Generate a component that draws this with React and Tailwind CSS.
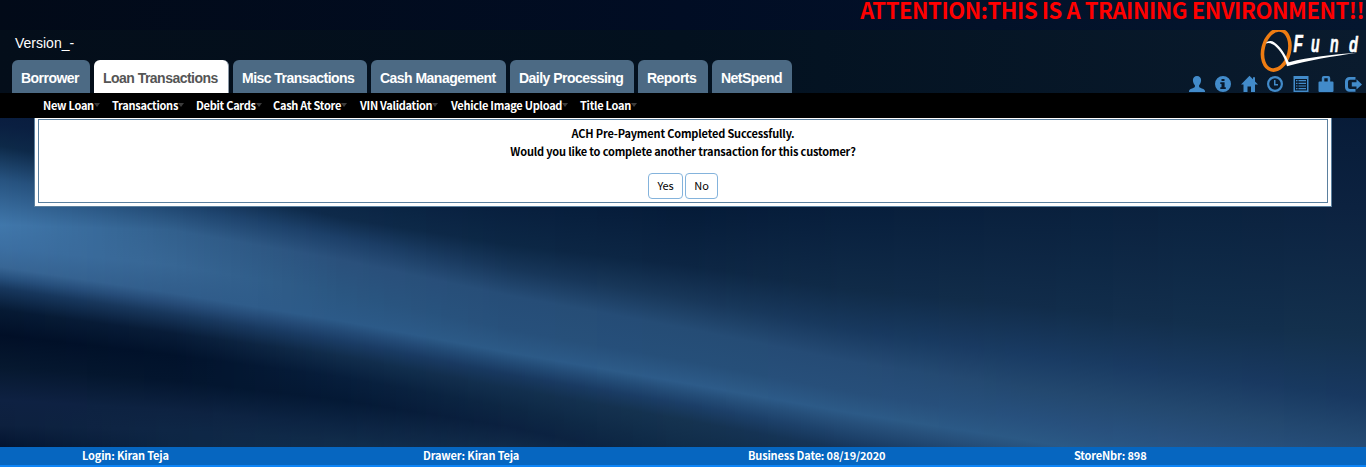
import React from "react";

// Each key column lists [y, colour] stops from the top of the backdrop down;
// stops with the same index follow one fold of the fabric across the page.
const COLUMNS = [
  { x: 0, s: [[93, "#08193a"], [125, "#0a1f41"], [146, "#0d2948"], [180, "#275380"], [225, "#4077ab"], [248, "#3c6fa2"], [267, "#386695"], [278, "#264f7c"], [288, "#17375d"], [310, "#061a34"], [335, "#010f27"], [367, "#06182f"], [400, "#0e2142"], [425, "#0d203e"], [447, "#031430"]] },
  { x: 170, s: [[93, "#071a38"], [145, "#08203f"], [180, "#0f2c4e"], [205, "#1f4670"], [230, "#32608d"], [265, "#376694"], [293, "#315d8b"], [303, "#264b77"], [314, "#18375c"], [333, "#081c38"], [355, "#01122b"], [380, "#03152e"], [410, "#0d2241"], [430, "#0e2645"], [447, "#0d2644"]] },
  { x: 340, s: [[93, "#061b3a"], [175, "#061f3f"], [218, "#0e2a4a"], [238, "#1c3f68"], [260, "#2a507b"], [293, "#2a5681"], [321, "#2c5a88"], [331, "#234a76"], [341, "#1a3c65"], [356, "#112d4c"], [377, "#071e3c"], [400, "#041935"], [425, "#0c2443"], [440, "#102b49"], [470, "#12304f"]] },
  { x: 510, s: [[93, "#051a38"], [200, "#071e3d"], [245, "#0c2745"], [269, "#173659"], [296, "#264d77"], [330, "#27507b"], [353, "#2c5a87"], [363, "#224a75"], [375, "#18385f"], [389, "#122f4e"], [408, "#0d2744"], [427, "#0b2140"], [447, "#102a48"], [470, "#12304f"], [500, "#12304f"]] },
  { x: 683, s: [[93, "#041834"], [207, "#051b38"], [265, "#0c2543"], [298, "#183759"], [328, "#254c75"], [360, "#264f79"], [383, "#2d5b89"], [393, "#244d78"], [404, "#1b3e67"], [420, "#153350"], [447, "#102c49"], [465, "#0d2744"], [480, "#102a48"], [500, "#12304f"], [520, "#12304f"]] },
  { x: 850, s: [[93, "#051935"], [207, "#071e3c"], [290, "#102b48"], [330, "#18395f"], [362, "#254b75"], [392, "#274f7a"], [413, "#2c5a87"], [423, "#264f7a"], [435, "#1e436c"], [450, "#15345a"], [475, "#102c49"], [490, "#0d2744"], [510, "#102a48"], [520, "#12304f"], [540, "#12304f"]] },
  { x: 1025, s: [[93, "#051a36"], [207, "#09203d"], [305, "#112c4a"], [355, "#193b63"], [388, "#23486f"], [418, "#27507d"], [440, "#2b5985"], [452, "#264f7a"], [465, "#1e436c"], [480, "#15345a"], [505, "#102c49"], [520, "#0d2744"], [530, "#102a48"], [540, "#12304f"], [560, "#12304f"]] },
  { x: 1200, s: [[93, "#061a36"], [207, "#0a223f"], [325, "#122f4d"], [375, "#193a61"], [412, "#23486f"], [445, "#29517e"], [470, "#2b5985"], [482, "#264f7a"], [495, "#1e436c"], [510, "#15345a"], [530, "#102c49"], [540, "#0d2744"], [550, "#102a48"], [560, "#12304f"], [570, "#12304f"]] },
  { x: 1366, s: [[93, "#061a36"], [207, "#0c2240"], [335, "#13304d"], [398, "#183860"], [435, "#22476f"], [470, "#29517e"], [497, "#2b5985"], [510, "#264f7a"], [522, "#1e436c"], [535, "#15345a"], [550, "#102c49"], [560, "#0d2744"], [570, "#102a48"], [580, "#12304f"], [590, "#12304f"]] },
];

const mix = (a, b, t) => a + (b - a) * t;
const rgb = (h) => [1, 3, 5].map((i) => parseInt(h.slice(i, i + 2), 16));
const STEP = 3;

function Backdrop() {
  const strips = [];
  for (let x = 0; x < 1366; x += STEP) {
    let i = 0;
    while (i < COLUMNS.length - 2 && COLUMNS[i + 1].x <= x) i++;
    const a = COLUMNS[i];
    const b = COLUMNS[i + 1];
    const t = (x - a.x) / (b.x - a.x);
    strips.push({
      x,
      stops: a.s.map(([y, c], k) => {
        const ca = rgb(c);
        const cb = rgb(b.s[k][1]);
        return {
          y: mix(y, b.s[k][0], t) / 600,
          c: `rgb(${ca.map((v, j) => Math.round(mix(v, cb[j], t))).join(",")})`,
        };
      }),
    });
  }
  return (
    <svg className="absolute inset-0 h-[467px] w-full" viewBox="0 0 1366 467" preserveAspectRatio="none" shapeRendering="crispEdges" aria-hidden="true">
      <defs>
        {strips.map((s) => (
          <linearGradient key={s.x} id={`fold${s.x}`} gradientUnits="userSpaceOnUse" x1="0" y1="0" x2="0" y2="600">
            {s.stops.map((p, k) => (
              <stop key={k} offset={p.y} stopColor={p.c} />
            ))}
          </linearGradient>
        ))}
      </defs>
      {strips.map((s) => (
        <rect key={s.x} x={s.x} y="0" width={STEP} height="467" fill={`url(#fold${s.x})`} />
      ))}
    </svg>
  );
}

function Logo() {
  return (
    <svg className="block h-[42px] w-[106px]" viewBox="0 0 106 42">
      <ellipse cx="16.2" cy="20" rx="13.2" ry="20.4" fill="none" stroke="#ee7c12" strokeWidth="3.6" transform="rotate(14 16.2 20)" />
      <path d="M5.8 13.500 C7.500 10.600 11.500 10.400 14.500 12.400 C20.500 16.600 25.500 24.500 28.800 32.200 C50 27 72 24.500 96 23 C72 26.500 50 30 27 36.200 C25.500 29 20 19.500 14 15 C11 12.800 8 12.600 5.800 13.500 Z" fill="#fff" />
      <g fill="#fff" stroke="#fff" strokeWidth=".6" fontFamily="Liberation Sans Narrow, Liberation Sans, sans-serif" fontWeight="700" fontStyle="italic" fontSize="22">
        <text transform="translate(33.500 21.700) scale(.7 1.060)">F</text>
        <text transform="translate(51 21.700) scale(.64 1.080)">u</text>
        <text transform="translate(70 21.700) scale(.64 1.080)">n</text>
        <text transform="translate(89 21.700) scale(.66 1.020)">d</text>
      </g>
    </svg>
  );
}

const ICONS = [
  ["user", <path d="M8 0C5.500 0 3.900 1.700 3.900 4c0 2 .8 4.200 2 5.300v1.200c0 .7-.5.900-1.200 1.200C2.700 12.500 0 13.400 0 15V16h16v-1c0-1.600-2.700-2.500-4.700-3.300-.7-.3-1.200-.5-1.200-1.200V9.300c1.200-1.100 2-3.300 2-5.300C12.100 1.700 10.500 0 8 0Z" />],
  ["info", <path fillRule="evenodd" d="M8 0a8 8 0 1 0 0 16A8 8 0 0 0 8 0ZM6.500 3h3v2h-3ZM5.300 6.300h4.300v4.900h1.200V13H5.300v-1.800h1.200V8.100H5.300Z" />],
  ["home", <path d="M8.500-.3 0 8.400h2.500V16h4V10.500h3.500V16h4V8.400H17L14 5.400V1.200h-2v2Z" />],
  ["time", <path fillRule="evenodd" d="M8 0a8 8 0 1 0 0 16A8 8 0 0 0 8 0Zm0 2.200a5.800 5.800 0 1 1 0 11.600A5.800 5.800 0 0 1 8 2.200ZM7 4h1.500v4H11v1.500H7Z" />],
  ["list", <path fillRule="evenodd" d="M.5 0h15v16H.5ZM2 3v11.500h12V3ZM3 4h1.500v1.200H3Zm2.500 0H13v1.200H5.500ZM3 6.700h1.500v1.200H3Zm2.500 0H13v1.200H5.500ZM3 9.400h1.500v1.200H3Zm2.500 0H13v1.200H5.500ZM3 12h1.500v1.200H3Zm2.500 0H13v1.200H5.500Z" />],
  ["lock", <path fillRule="evenodd" d="M5.800 0h4.400A2 2 0 0 1 12.200 2v3.500H14.500a1 1 0 0 1 1 1V15a1 1 0 0 1-1 1h-13a1 1 0 0 1-1-1V6.500a1 1 0 0 1 1-1H3.800V2A2 2 0 0 1 5.800 0Zm.5 2.300v3.200h3.400V2.300Z" />],
  ["logout", <path d="M4.500 1H10.500V3.700H5A2 2 0 0 0 3 5.700V11a2 2 0 0 0 2 2H10.500V15.700H4.500A4.500 4.500 0 0 1 0 11.200V5.500A4.500 4.500 0 0 1 4.500 1ZM11.500 3.300 17 8.400 11.500 13.500V10.500H6.800V6.300H11.500Z" />],
];
const ICON_X = ["ml-0", "ml-[10px]", "ml-[10px]", "ml-[10px]", "ml-[10px]", "ml-[9px]", "ml-[11px]"];

const TABS = [
  ["Borrower", "w-[78px]"],
  ["Loan Transactions", "w-[135px]"],
  ["Misc Transactions", "w-[134px]"],
  ["Cash Management", "w-[135px]"],
  ["Daily Processing", "w-[124px]"],
  ["Reports", "w-[70px]"],
  ["NetSpend", "w-[80px]"],
];

const MENU = [
  ["New Loan", "w-[69px]"],
  ["Transactions", "w-[84px]"],
  ["Debit Cards", "w-[77px]"],
  ["Cash At Store", "w-[87px]"],
  ["VIN Validation", "w-[91px]"],
  ["Vehicle Image Upload", "w-[129px]"],
  ["Title Loan", "w-[80px]"],
];

export default function App() {
  return (
    <div className="relative h-[467px] w-full overflow-hidden bg-[#061a36] font-['Noto_Sans_CJK_SC',sans-serif]">
      <Backdrop />
      <div className="relative flex h-full flex-col">
        <div className="flex h-[30px] justify-end overflow-hidden bg-linear-to-r from-[#020a18] via-[#010d24] to-[#04162f]">
          <div className="-mr-[6px] h-[30px] whitespace-nowrap text-[22px] leading-[19px] font-bold tracking-[-0.43px] text-[#ff0000]">
            ATTENTION:THIS IS A TRAINING ENVIRONMENT!!!
          </div>
        </div>
        <header className="flex h-[63px] justify-between bg-linear-to-r from-[#040e1a] via-[#03111f] to-[#0a1b2e] font-['Liberation_Sans',sans-serif]">
          <div className="flex flex-col justify-between">
            <div className="pt-[3px] pl-[15px] text-[14px] leading-[20px] text-white">Version_-</div>
            <nav className="flex gap-[4px] pl-[12px]">
              {TABS.map(([label, w], i) => (
                <div
                  key={label}
                  className={`${w} h-[33px] rounded-t-[6px] pl-[9px] pt-[8px] text-[14px] leading-[20px] font-bold tracking-[-0.53px] whitespace-nowrap ${
                    i === 1 ? "border-r border-[#8b98a6] bg-white text-[#555555]" : "bg-[#4c6a84] text-white"
                  }`}
                >
                  {label}
                </div>
              ))}
            </nav>
          </div>
          <div className="flex flex-col items-end">
            <Logo />
            <div className="mt-[4px] flex pr-[5px]">
              {ICONS.map(([name, shape], i) => (
                <svg key={name} className={`${ICON_X[i]} size-4 overflow-visible fill-[#428bca]`} viewBox="0 0 16 16">
                  {shape}
                </svg>
              ))}
            </div>
          </div>
        </header>
        <nav className="flex h-[25px] shrink-0 items-center bg-black pb-[1px] pl-[43px] text-[11px] leading-[24px] font-bold tracking-[-0.27px] text-white">
          {MENU.map(([label, w]) => (
            <div key={label} className={`${w} flex items-center whitespace-nowrap`}>
              <span>{label}</span>
              <svg className="h-[4px] w-[6px] fill-[#3d3d3d]" viewBox="0 0 6 4">
                <path d="M0 0h6L3 4Z" />
              </svg>
            </div>
          ))}
        </nav>
        <main className="mr-[34px] ml-[34px] flex h-[89px] shrink-0 border border-t-0 border-[#5b809f] bg-white px-[3px] pt-[1px] pb-[3px]">
          <div className="flex flex-1 flex-col items-center border border-[#5b809f] pt-[4px] text-[11px] leading-[18px] tracking-[-0.17px] text-black">
            <p className="font-bold">ACH Pre-Payment Completed Successfully.</p>
            <p className="font-bold">Would you like to complete another transaction for this customer?</p>
            <div className="mt-[13px] flex gap-[2px]">
              <button className="h-[26px] w-[35px] rounded-[4px] border border-[#84b3dc] bg-white pb-[2px] text-[11px]">Yes</button>
              <button className="h-[26px] w-[33px] rounded-[4px] border border-[#84b3dc] bg-white pb-[2px] text-[11px]">No</button>
            </div>
          </div>
        </main>
        <footer className="mt-auto flex h-[20px] border-b-2 border-[#0d84f5] bg-[#0666c0] pl-[82px] text-[11px] leading-[16px] font-bold tracking-[-0.17px] whitespace-nowrap text-white">
          <span className="w-[341px]">Login: Kiran Teja</span>
          <span className="w-[325px]">Drawer: Kiran Teja</span>
          <span className="w-[326px]">Business Date: 08/19/2020</span>
          <span>StoreNbr: 898</span>
        </footer>
      </div>
    </div>
  );
}
